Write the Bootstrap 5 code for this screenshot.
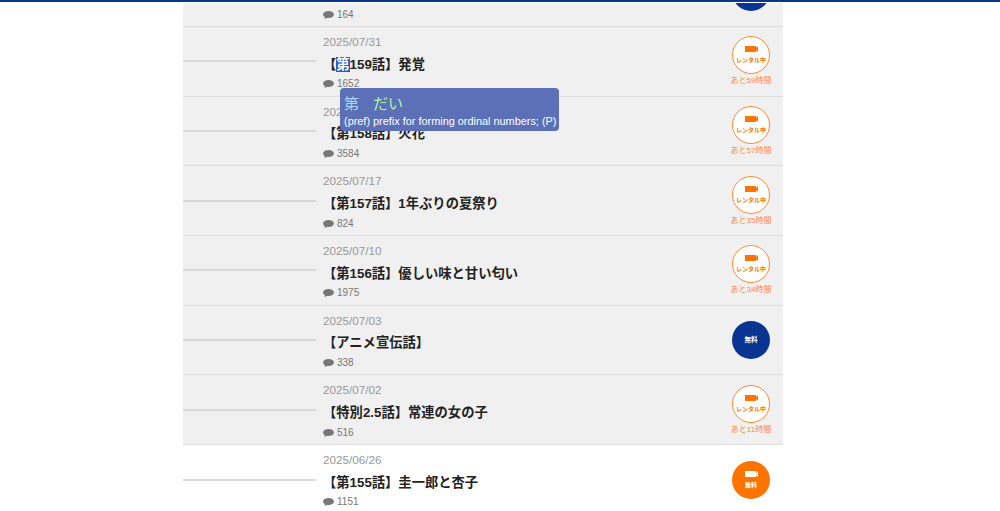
<!DOCTYPE html>
<html lang="ja">
<head>
    <meta charset="UTF-8">
    <meta name="viewport" content="width=device-width, initial-scale=1.0">
    <title>エピソード一覧</title>
    <link href="https://cdn.jsdelivr.net/npm/bootstrap@5.3.0/dist/css/bootstrap.min.css" rel="stylesheet">
    <style>
        html, body { height: 100%; overflow: hidden; }
        body {
            background: #fff;
            font-family: "Liberation Sans", "Noto Sans CJK JP", sans-serif;
            border-top: 2px solid #0a3491;
        }
        .top-gap { position: relative; z-index: 1; height: 1px; background: #fff; }
        .ep-list { width: 600px; margin: -45.6px 0 0 183px; }
        .ep-row {
            height: 69.67px;
            background: #f0f0f0;
            border-bottom: 1px solid #dcdcdc;
            padding-right: 7px;
        }
        .ep-row.is-new { background: #fff; border-bottom: 0; }
        .ep-thumb { width: 133px; height: 2px; background: #d8d8d8; margin-right: 7px; flex: none; }
        .ep-date { font-size: 11.7px; line-height: 15px; min-height: 23px; color: #999; padding-top: 7px; }
        .ep-title { font-size: 13.3px; line-height: 20px; min-height: 20px; font-weight: 700; color: #222; margin-top: 4.5px; }
        .ep-title .hl { background: #2a5bc8; color: #fff; }
        .ep-count { font-size: 10px; line-height: 14px; color: #777; margin-top: 2.8px; gap: 3px; }
        .ep-side { width: 50px; flex: none; }
        .ep-circle {
            width: 38px; height: 38px; border-radius: 50%;
            font-size: 6px; line-height: 8px; font-weight: 700;
        }
        .ep-circle.rental { background: #fff; border: 1px solid #ff8a3a; color: #ff7300; }
        .ep-circle.free { background: #ff7300; color: #fff; }
        .ep-circle.navy { background: #0a3491; color: #fff; font-size: 6.5px; }
        .ep-left { font-size: 8px; line-height: 11px; color: #ff8a3a; margin-top: 1px; white-space: nowrap; }
        .word-pop {
            position: absolute; left: 340px; top: 88px; z-index: 2;
            width: 219px; height: 43px; padding: 5px 4px;
            background: #5b70b6; border-radius: 4px; color: #fff;
            font-size: 10.9px; line-height: 14px; white-space: nowrap;
        }
        .word-pop .kanji { font-size: 15px; line-height: 21px; color: #a9d8ff; margin-right: 14px; }
        .word-pop .kana { font-size: 15px; line-height: 21px; color: #b4f0a8; }
    </style>
</head>
<body>
    <div class="top-gap"></div>
    <div class="ep-list" id="list"></div>

    <div class="word-pop">
        <div><span class="kanji">第</span><span class="kana">だい</span></div>
        <div>(pref) prefix for forming ordinal numbers; (P)</div>
    </div>

    <script>
        // first row is scrolled off, only its comment count shows
        const eps = [
            { date: '', title: '', count: 164, kind: 'navy', noLabel: true },
            { date: '2025/07/31', title: '【<span class="hl">第</span>159話】発覚', count: 1652, kind: 'rental', left: 'あと59時間' },
            { date: '2025/07/24', title: '【第158話】火花', count: 3584, kind: 'rental', left: 'あと57時間' },
            { date: '2025/07/17', title: '【第157話】1年ぶりの夏祭り', count: 824, kind: 'rental', left: 'あと35時間' },
            { date: '2025/07/10', title: '【第156話】優しい味と甘い匂い', count: 1975, kind: 'rental', left: 'あと34時間' },
            { date: '2025/07/03', title: '【アニメ宣伝話】', count: 338, kind: 'navy' },
            { date: '2025/07/02', title: '【特別2.5話】常連の女の子', count: 516, kind: 'rental', left: 'あと11時間' },
            { date: '2025/06/26', title: '【第155話】圭一郎と杏子', count: 1151, kind: 'free', isNew: true }
        ];

        const camera = '<svg width="13" height="6" viewBox="0 0 13 6" class="d-block mb-1"><path fill="currentColor" d="M0 0h11v2l1-1.500h1v5h-1l-1-1.500v2H0z"/></svg>';
        const bubble = '<svg width="11" height="8" viewBox="0 0 11 8"><ellipse cx="5.500" cy="3.500" rx="5.500" ry="3.500" fill="#777"/><path fill="#777" d="M2 5.500 1.500 8 5 6.500z"/></svg>';

        function badge(ep) {
            if (ep.kind === 'rental') {
                return `<div class="ep-circle rental d-flex flex-column align-items-center justify-content-center">${camera}<span>レンタル中</span></div><div class="ep-left">${ep.left}</div>`;
            }
            if (ep.kind === 'free') {
                return `<div class="ep-circle free d-flex flex-column align-items-center justify-content-center">${camera}<span>無料</span></div>`;
            }
            return `<div class="ep-circle navy d-flex align-items-center justify-content-center">${ep.noLabel ? '' : '無料'}</div>`;
        }

        document.getElementById('list').innerHTML = eps.map(ep => `
            <div class="ep-row d-flex align-items-stretch${ep.isNew ? ' is-new' : ''}">
                <div class="d-flex align-items-center"><div class="ep-thumb"></div></div>
                <div class="flex-grow-1">
                    <div class="ep-date">${ep.date}</div>
                    <div class="ep-title">${ep.title}</div>
                    <div class="ep-count d-flex align-items-center">${bubble}<span>${ep.count}</span></div>
                </div>
                <div class="ep-side d-flex flex-column align-items-center justify-content-center">${badge(ep)}</div>
            </div>`).join('');
    </script>
    <script src="https://cdn.jsdelivr.net/npm/bootstrap@5.3.0/dist/js/bootstrap.bundle.min.js"></script>
</body>
</html>
